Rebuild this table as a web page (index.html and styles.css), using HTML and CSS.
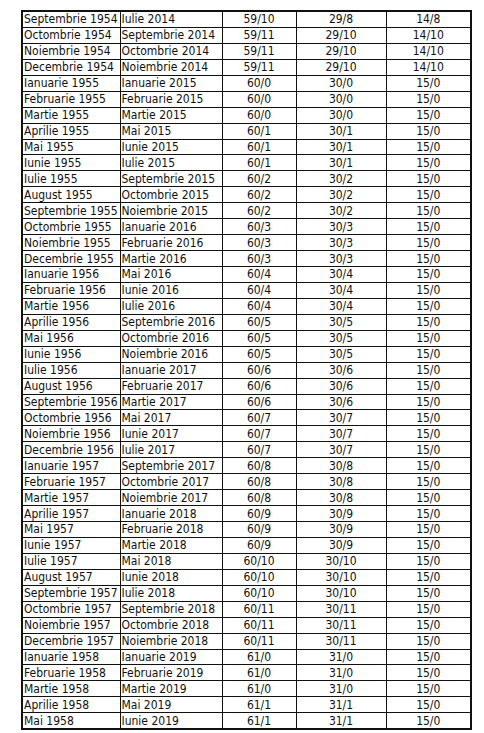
FILE: index.html
```html
<!DOCTYPE html>
<html lang="ro">
<head>
<meta charset="utf-8">
<title>Tabel vârstă pensionare</title>
<link rel="stylesheet" href="styles.css">
</head>
<body>
<table class="grid">
<colgroup>
<col class="c1"><col class="c2"><col class="c3"><col class="c4"><col class="c5">
</colgroup>
<tbody>
<tr><td>Septembrie 1954</td><td>Iulie 2014</td><td class="n">59/10</td><td class="n">29/8</td><td class="n">14/8</td></tr>
<tr><td>Octombrie 1954</td><td>Septembrie 2014</td><td class="n">59/11</td><td class="n">29/10</td><td class="n">14/10</td></tr>
<tr><td>Noiembrie 1954</td><td>Octombrie 2014</td><td class="n">59/11</td><td class="n">29/10</td><td class="n">14/10</td></tr>
<tr><td>Decembrie 1954</td><td>Noiembrie 2014</td><td class="n">59/11</td><td class="n">29/10</td><td class="n">14/10</td></tr>
<tr><td>Ianuarie 1955</td><td>Ianuarie 2015</td><td class="n">60/0</td><td class="n">30/0</td><td class="n">15/0</td></tr>
<tr><td>Februarie 1955</td><td>Februarie 2015</td><td class="n">60/0</td><td class="n">30/0</td><td class="n">15/0</td></tr>
<tr><td>Martie 1955</td><td>Martie 2015</td><td class="n">60/0</td><td class="n">30/0</td><td class="n">15/0</td></tr>
<tr><td>Aprilie 1955</td><td>Mai 2015</td><td class="n">60/1</td><td class="n">30/1</td><td class="n">15/0</td></tr>
<tr><td>Mai 1955</td><td>Iunie 2015</td><td class="n">60/1</td><td class="n">30/1</td><td class="n">15/0</td></tr>
<tr><td>Iunie 1955</td><td>Iulie 2015</td><td class="n">60/1</td><td class="n">30/1</td><td class="n">15/0</td></tr>
<tr><td>Iulie 1955</td><td>Septembrie 2015</td><td class="n">60/2</td><td class="n">30/2</td><td class="n">15/0</td></tr>
<tr><td>August 1955</td><td>Octombrie 2015</td><td class="n">60/2</td><td class="n">30/2</td><td class="n">15/0</td></tr>
<tr><td>Septembrie 1955</td><td>Noiembrie 2015</td><td class="n">60/2</td><td class="n">30/2</td><td class="n">15/0</td></tr>
<tr><td>Octombrie 1955</td><td>Ianuarie 2016</td><td class="n">60/3</td><td class="n">30/3</td><td class="n">15/0</td></tr>
<tr><td>Noiembrie 1955</td><td>Februarie 2016</td><td class="n">60/3</td><td class="n">30/3</td><td class="n">15/0</td></tr>
<tr><td>Decembrie 1955</td><td>Martie 2016</td><td class="n">60/3</td><td class="n">30/3</td><td class="n">15/0</td></tr>
<tr><td>Ianuarie 1956</td><td>Mai 2016</td><td class="n">60/4</td><td class="n">30/4</td><td class="n">15/0</td></tr>
<tr><td>Februarie 1956</td><td>Iunie 2016</td><td class="n">60/4</td><td class="n">30/4</td><td class="n">15/0</td></tr>
<tr><td>Martie 1956</td><td>Iulie 2016</td><td class="n">60/4</td><td class="n">30/4</td><td class="n">15/0</td></tr>
<tr><td>Aprilie 1956</td><td>Septembrie 2016</td><td class="n">60/5</td><td class="n">30/5</td><td class="n">15/0</td></tr>
<tr><td>Mai 1956</td><td>Octombrie 2016</td><td class="n">60/5</td><td class="n">30/5</td><td class="n">15/0</td></tr>
<tr><td>Iunie 1956</td><td>Noiembrie 2016</td><td class="n">60/5</td><td class="n">30/5</td><td class="n">15/0</td></tr>
<tr><td>Iulie 1956</td><td>Ianuarie 2017</td><td class="n">60/6</td><td class="n">30/6</td><td class="n">15/0</td></tr>
<tr><td>August 1956</td><td>Februarie 2017</td><td class="n">60/6</td><td class="n">30/6</td><td class="n">15/0</td></tr>
<tr><td>Septembrie 1956</td><td>Martie 2017</td><td class="n">60/6</td><td class="n">30/6</td><td class="n">15/0</td></tr>
<tr><td>Octombrie 1956</td><td>Mai 2017</td><td class="n">60/7</td><td class="n">30/7</td><td class="n">15/0</td></tr>
<tr><td>Noiembrie 1956</td><td>Iunie 2017</td><td class="n">60/7</td><td class="n">30/7</td><td class="n">15/0</td></tr>
<tr><td>Decembrie 1956</td><td>Iulie 2017</td><td class="n">60/7</td><td class="n">30/7</td><td class="n">15/0</td></tr>
<tr><td>Ianuarie 1957</td><td>Septembrie 2017</td><td class="n">60/8</td><td class="n">30/8</td><td class="n">15/0</td></tr>
<tr><td>Februarie 1957</td><td>Octombrie 2017</td><td class="n">60/8</td><td class="n">30/8</td><td class="n">15/0</td></tr>
<tr><td>Martie 1957</td><td>Noiembrie 2017</td><td class="n">60/8</td><td class="n">30/8</td><td class="n">15/0</td></tr>
<tr><td>Aprilie 1957</td><td>Ianuarie 2018</td><td class="n">60/9</td><td class="n">30/9</td><td class="n">15/0</td></tr>
<tr><td>Mai 1957</td><td>Februarie 2018</td><td class="n">60/9</td><td class="n">30/9</td><td class="n">15/0</td></tr>
<tr><td>Iunie 1957</td><td>Martie 2018</td><td class="n">60/9</td><td class="n">30/9</td><td class="n">15/0</td></tr>
<tr><td>Iulie 1957</td><td>Mai 2018</td><td class="n">60/10</td><td class="n">30/10</td><td class="n">15/0</td></tr>
<tr><td>August 1957</td><td>Iunie 2018</td><td class="n">60/10</td><td class="n">30/10</td><td class="n">15/0</td></tr>
<tr><td>Septembrie 1957</td><td>Iulie 2018</td><td class="n">60/10</td><td class="n">30/10</td><td class="n">15/0</td></tr>
<tr><td>Octombrie 1957</td><td>Septembrie 2018</td><td class="n">60/11</td><td class="n">30/11</td><td class="n">15/0</td></tr>
<tr><td>Noiembrie 1957</td><td>Octombrie 2018</td><td class="n">60/11</td><td class="n">30/11</td><td class="n">15/0</td></tr>
<tr><td>Decembrie 1957</td><td>Noiembrie 2018</td><td class="n">60/11</td><td class="n">30/11</td><td class="n">15/0</td></tr>
<tr><td>Ianuarie 1958</td><td>Ianuarie 2019</td><td class="n">61/0</td><td class="n">31/0</td><td class="n">15/0</td></tr>
<tr><td>Februarie 1958</td><td>Februarie 2019</td><td class="n">61/0</td><td class="n">31/0</td><td class="n">15/0</td></tr>
<tr><td>Martie 1958</td><td>Martie 2019</td><td class="n">61/0</td><td class="n">31/0</td><td class="n">15/0</td></tr>
<tr><td>Aprilie 1958</td><td>Mai 2019</td><td class="n">61/1</td><td class="n">31/1</td><td class="n">15/0</td></tr>
<tr><td>Mai 1958</td><td>Iunie 2019</td><td class="n">61/1</td><td class="n">31/1</td><td class="n">15/0</td></tr>
</tbody>
</table>
</body>
</html>
```

FILE: styles.css
```css
html, body {
  margin: 0;
  padding: 0;
  background: #ffffff;
}

body {
  padding: 10px 0 0 21px;
  font-family: "DejaVu Sans Condensed", "DejaVu Sans", sans-serif;
  font-size: 12px;
  color: #111111;
}

.grid {
  border-collapse: collapse;
  table-layout: fixed;
  border: 2px solid #111;
}

.c1 { width: 98px; }
.c2 { width: 102px; }
.c3 { width: 74px; }
.c4 { width: 90px; }
.c5 { width: 85px; }

.grid td {
  border: 1px solid #111;
  height: 14.95px;
  padding: 0 0 0 1px;
  line-height: 14px;
  white-space: nowrap;
  overflow: hidden;
  vertical-align: middle;
}

.grid td.n {
  text-align: center;
  padding: 0;
}
```
